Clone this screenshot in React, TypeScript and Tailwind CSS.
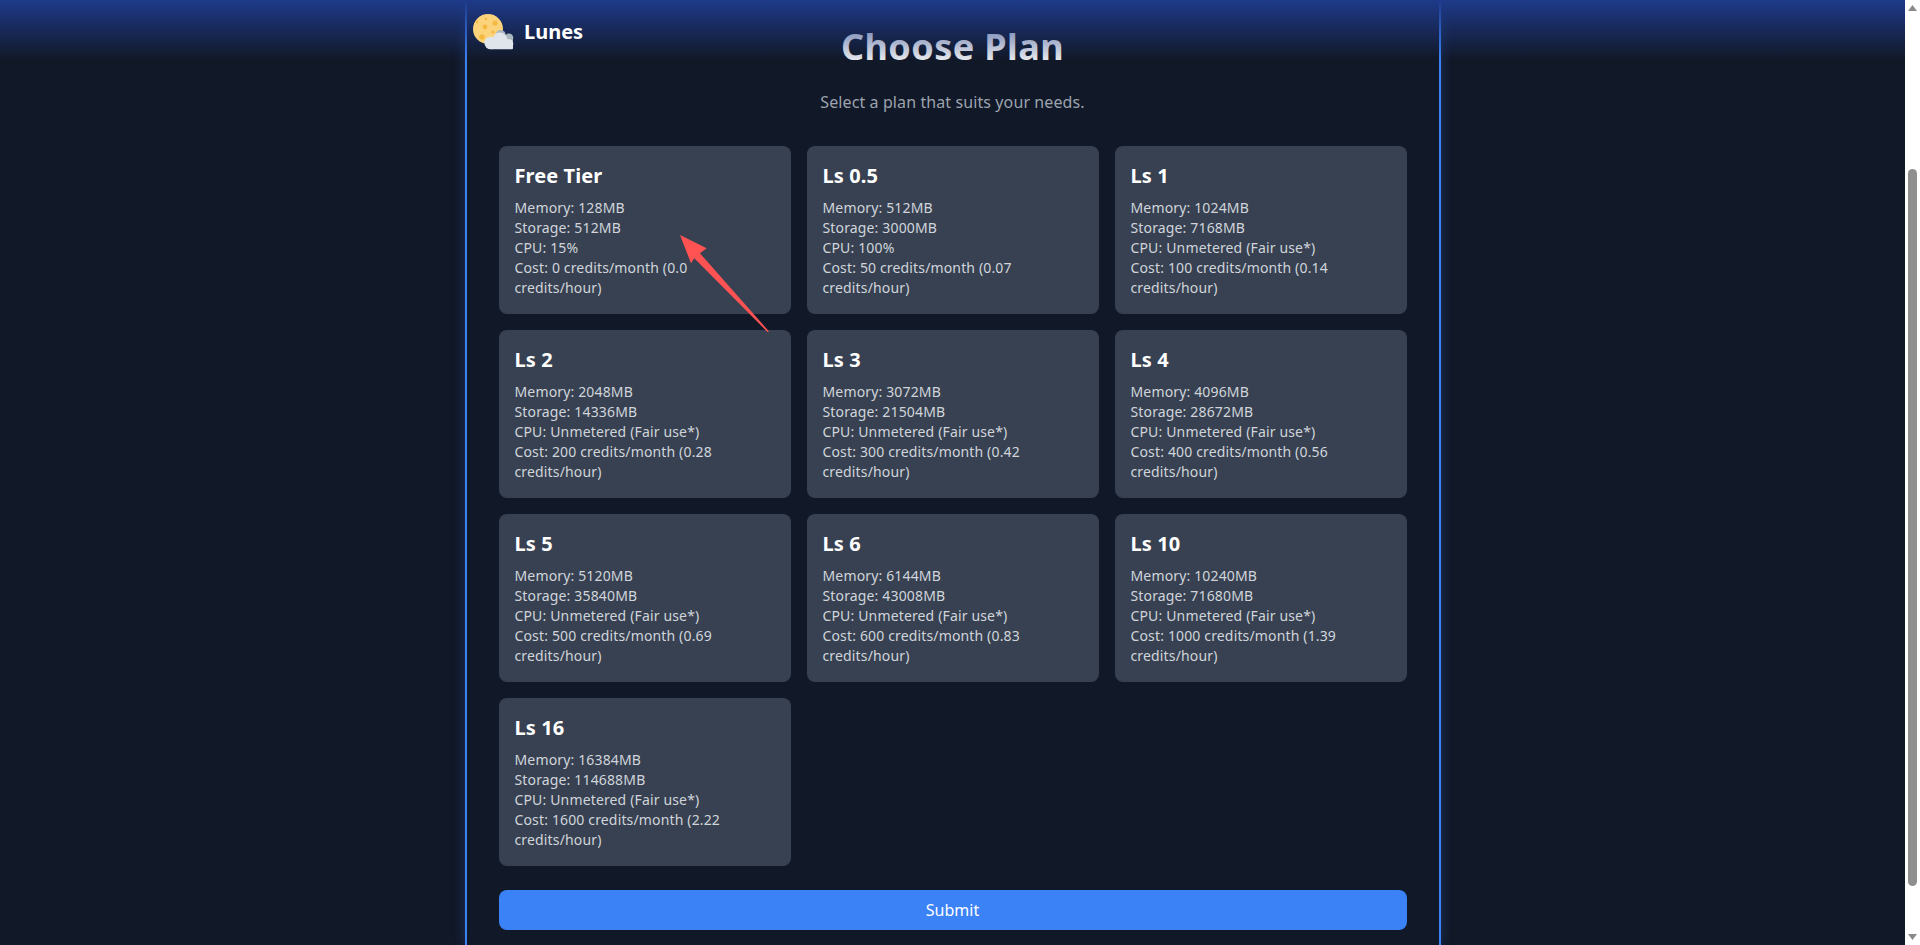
const plans = [
  { name: "Free Tier", mem: 128, sto: 512, cpu: "15%", cost: 0, hr: "0.0" },
  { name: "Ls 0.5", mem: 512, sto: 3000, cpu: "100%", cost: 50, hr: "0.07" },
  { name: "Ls 1", mem: 1024, sto: 7168, cpu: "Unmetered (Fair use*)", cost: 100, hr: "0.14" },
  { name: "Ls 2", mem: 2048, sto: 14336, cpu: "Unmetered (Fair use*)", cost: 200, hr: "0.28" },
  { name: "Ls 3", mem: 3072, sto: 21504, cpu: "Unmetered (Fair use*)", cost: 300, hr: "0.42" },
  { name: "Ls 4", mem: 4096, sto: 28672, cpu: "Unmetered (Fair use*)", cost: 400, hr: "0.56" },
  { name: "Ls 5", mem: 5120, sto: 35840, cpu: "Unmetered (Fair use*)", cost: 500, hr: "0.69" },
  { name: "Ls 6", mem: 6144, sto: 43008, cpu: "Unmetered (Fair use*)", cost: 600, hr: "0.83" },
  { name: "Ls 10", mem: 10240, sto: 71680, cpu: "Unmetered (Fair use*)", cost: 1000, hr: "1.39" },
  { name: "Ls 16", mem: 16384, sto: 114688, cpu: "Unmetered (Fair use*)", cost: 1600, hr: "2.22" },
];

function Logo() {
  return (
    <svg width="42" height="38" viewBox="0 0 42 38" className="shrink-0">
      <circle cx="15" cy="15" r="15" fill="#fbd37a" />
      <circle cx="12" cy="13" r="2.4" fill="#f5b942" />
      <circle cx="22" cy="9" r="2.6" fill="#f5b942" />
      <circle cx="9" cy="23" r="2.8" fill="#f5b942" />
      <circle cx="4" cy="8" r="1.3" fill="#f5b942" />
      <circle cx="13" cy="5" r="1.2" fill="#f5b942" />
      <circle cx="20" cy="18" r="1.6" fill="#f5b942" />
      <circle cx="27.700" cy="21" r="5" fill="#aab7bf" />
      <circle cx="36" cy="23.700" r="4.300" fill="#aab7bf" />
      <rect x="24" y="22" width="16" height="8" fill="#aab7bf" />
      <circle cx="17.700" cy="29" r="6.300" fill="#dfe5ea" />
      <circle cx="27" cy="26" r="7.500" fill="#dfe5ea" />
      <circle cx="35.300" cy="30" r="5" fill="#dfe5ea" />
      <rect x="17" y="30" width="23" height="5.300" rx="1" fill="#dfe5ea" />
    </svg>
  );
}

function Card({ p }: { p: (typeof plans)[number] }) {
  return (
    <div className="h-[168px] rounded-lg bg-[#374151] p-4">
      <h3 className="mb-2 text-xl leading-7 font-bold tracking-[0.1px] text-white">{p.name}</h3>
      <p className="text-sm leading-5 tracking-[0.15px] text-[#d1d5db]">
        Memory: {p.mem}MB
        <br />
        Storage: {p.sto}MB
        <br />
        CPU: {p.cpu}
        <br />
        Cost: {p.cost} credits/month ({p.hr} credits/hour)
      </p>
    </div>
  );
}

export default function App() {
  return (
    <div className="flex h-[945px] w-full overflow-hidden bg-[#111827] font-['Noto_Sans','Liberation_Sans',sans-serif]">
      <div className="relative h-full flex-1">
        <main className="mx-auto h-full w-[976px] border-x-2 border-[#3b82f6] bg-[#111827] px-8 pt-[27px] shadow-[0_0_12px_rgba(59,130,246,0.25)]">
          <h1 className="text-center text-4xl leading-10 font-bold tracking-[0.4px] text-[#e5e7eb]">Choose Plan</h1>
          <p className="mt-[23px] mb-8 text-center text-base leading-6 tracking-[0.1px] text-[#9ca3af]">Select a plan that suits your needs.</p>
          <div className="grid grid-cols-3 gap-4">
            {plans.map((p) => (
              <Card key={p.name} p={p} />
            ))}
          </div>
          <button className="mt-6 h-10 w-full rounded-lg bg-[#3b82f6] text-base text-white">Submit</button>
        </main>
        <div className="pointer-events-none absolute inset-x-0 top-0 h-[60px] bg-gradient-to-b from-[#1e3a8a] to-transparent" />
        <div className="absolute top-[14px] left-[473px] flex items-start gap-3">
          <Logo />
          <span className="mt-[4px] ml-[-3px] text-xl leading-7 font-bold text-white">Lunes</span>
        </div>
        <svg className="pointer-events-none absolute top-[230px] left-[675px]" width="100" height="106" viewBox="675 230 100 106">
          <polygon points="680,235 706.700,248.300 700,253.300 769,331.500 767.500,332 694.300,258.300 691,263.300" fill="#ff5252" />
        </svg>
      </div>
      <div className="flex h-full w-[15px] flex-col items-center bg-white">
        <svg width="9" height="6" viewBox="0 0 9 6" className="mt-[5px]">
          <polygon points="4.500,0 9,6 0,6" fill="#8a8a8a" />
        </svg>
        <div className="mt-[158px] h-[717px] w-[9px] rounded-[5px] bg-[#8f8f8f]" />
        <div className="flex-1" />
        <svg width="9" height="6" viewBox="0 0 9 6" className="mb-[5px]">
          <polygon points="0,0 9,0 4.500,6" fill="#8a8a8a" />
        </svg>
      </div>
    </div>
  );
}
